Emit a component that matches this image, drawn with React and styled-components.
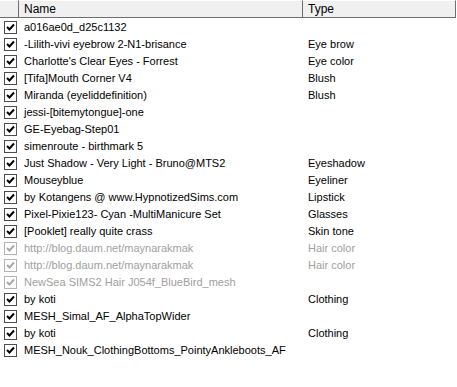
import styled, { createGlobalStyle } from 'styled-components';

const GlobalStyle = createGlobalStyle`
   html, body {
      margin: 0;
      padding: 0;
      background: #ffffff;
   }
   body {
      font-family: "Liberation Sans", Arial, sans-serif;
      font-size: 11px;
      color: #000000;
   }
`;

const rows = [
   { name: 'a016ae0d_d25c1132', type: '' },
   { name: '-Lilith-vivi eyebrow 2-N1-brisance', type: 'Eye brow' },
   { name: "Charlotte's Clear Eyes - Forrest", type: 'Eye color' },
   { name: '[Tifa]Mouth Corner V4', type: 'Blush' },
   { name: 'Miranda (eyeliddefinition)', type: 'Blush' },
   { name: 'jessi-[bitemytongue]-one', type: '' },
   { name: 'GE-Eyebag-Step01', type: '' },
   { name: 'simenroute - birthmark 5', type: '' },
   { name: 'Just Shadow - Very Light - Bruno@MTS2', type: 'Eyeshadow' },
   { name: 'Mouseyblue', type: 'Eyeliner' },
   { name: 'by Kotangens @ www.HypnotizedSims.com', type: 'Lipstick' },
   { name: 'Pixel-Pixie123- Cyan -MultiManicure Set', type: 'Glasses' },
   { name: '[Pooklet] really quite crass', type: 'Skin tone' },
   { name: 'http://blog.daum.net/maynarakmak', type: 'Hair color', dim: true },
   { name: 'http://blog.daum.net/maynarakmak', type: 'Hair color', dim: true },
   { name: 'NewSea SIMS2 Hair J054f_BlueBird_mesh', type: '', dim: true },
   { name: 'by koti', type: 'Clothing' },
   { name: 'MESH_Simal_AF_AlphaTopWider', type: '' },
   { name: 'by koti', type: 'Clothing' },
   { name: 'MESH_Nouk_ClothingBottoms_PointyAnkleboots_AF', type: '' },
];

const ListView = styled.div`
   width: 457px;
   height: 387px;
   background: #ffffff;
   overflow: hidden;
`;

const Header = styled.div`
   display: grid;
   grid-template-columns: 19px 284px 153px;
   height: 17px;
   background: #f0f0f0;
   border-bottom: 1px solid #6e6e6e;
   width: 456px;
`;

const HeaderCell = styled.div`
   border-right: 1px solid #6e6e6e;
   border-top: 1px solid #ffffff;
   padding-left: 5px;
   line-height: 16px;
   font-size: 12px;
   color: #000000;
   white-space: nowrap;
`;

const Rows = styled.div`
   display: flex;
   flex-direction: column;
   padding-top: 1px;
`;

const Row = styled.div`
   display: grid;
   grid-template-columns: 19px 284px 153px;
   height: 17px;
   align-items: center;
   color: ${p => (p.$dim ? '#a0a0a0' : '#000000')};
`;

const CheckCell = styled.div`
   display: flex;
   align-items: center;
   padding-left: 4px;
`;

const Box = styled.div`
   width: 11px;
   height: 11px;
   border: 1px solid ${p => (p.$dim ? '#b4b4b4' : '#4c4c4c')};
   background: #ffffff;
   display: flex;
   align-items: center;
   justify-content: center;
`;

const Text = styled.div`
   padding-left: 5px;
   white-space: nowrap;
   line-height: 17px;
`;

const Check = ({ dim }) => (
   <Box $dim={dim}>
      <svg width='9' height='9' viewBox='0 0 9 9'>
         <path
            d='M1 4 L3.5 6.5 L8 1.5'
            fill='none'
            stroke={dim ? '#a8a8a8' : '#000000'}
            strokeWidth='2'
         />
      </svg>
   </Box>
);

const App = () => (
   <>
      <GlobalStyle />
      <ListView>
         <Header>
            <HeaderCell />
            <HeaderCell>Name</HeaderCell>
            <HeaderCell>Type</HeaderCell>
         </Header>
         <Rows>
            {rows.map((row, index) => (
               <Row key={index} $dim={row.dim}>
                  <CheckCell>
                     <Check dim={row.dim} />
                  </CheckCell>
                  <Text>{row.name}</Text>
                  <Text>{row.type}</Text>
               </Row>
            ))}
         </Rows>
      </ListView>
   </>
);

export default App;
